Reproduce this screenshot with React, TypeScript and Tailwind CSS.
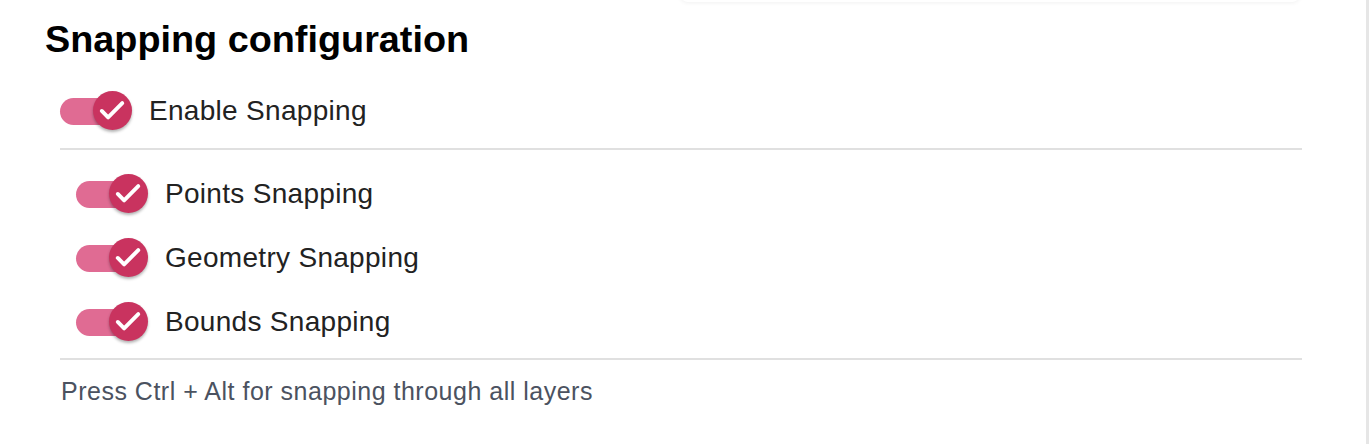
import { useState } from 'react'

type Option = { id: string; label: string }

const subOptions: Option[] = [
  { id: 'points', label: 'Points Snapping' },
  { id: 'geometry', label: 'Geometry Snapping' },
  { id: 'bounds', label: 'Bounds Snapping' },
]

function Toggle({ checked, onChange }: { checked: boolean; onChange: () => void }) {
  return (
    <button
      type="button"
      onClick={onChange}
      className="relative flex h-[40px] w-[72px] shrink-0 items-center"
    >
      <span
        className={
          'block h-[27px] w-[65px] rounded-full ' + (checked ? 'bg-[#e06b93]' : 'bg-[#c4c4c4]')
        }
      />
      <span
        className={
          'absolute top-[0px] h-[39px] w-[39px] rounded-full shadow-[0_2px_3px_rgba(0,0,0,0.3)] ' +
          (checked ? 'left-[33px] bg-[#c9335f]' : 'left-0 bg-[#f5f5f5]')
        }
      >
        {checked && (
          <svg viewBox="0 0 40 40" className="h-[39px] w-[39px]" fill="none">
            <path
              d="M9 20.5l6.5 6.5L30 12.5"
              stroke="#fff"
              strokeWidth="4"
              strokeLinecap="round"
              strokeLinejoin="round"
            />
          </svg>
        )}
      </span>
    </button>
  )
}

export default function App() {
  const [enabled, setEnabled] = useState(true)
  const [opts, setOpts] = useState<Record<string, boolean>>({
    points: true,
    geometry: true,
    bounds: true,
  })

  return (
    <div className="relative h-[444px] w-[1370px] overflow-hidden bg-white font-['Liberation_Sans',Arial,sans-serif]">
      {/* faint shadow from the panel above */}
      <div className="absolute -top-[10px] left-[680px] h-[12px] w-[620px] rounded-b-lg shadow-[0_1px_4px_rgba(0,0,0,0.06)]" />
      <div className="absolute right-[1px] top-0 h-full w-[3px] bg-[#e6e6e6]" />

      <div className="pl-[45px] pr-[68px] pt-[17px]">
        <h2 className="text-[37.8px] font-bold leading-[44px] text-black">
          Snapping configuration
        </h2>

        <div className="pl-[15px]">
          <div className="mt-[30px] flex items-center gap-[17px]">
            <Toggle checked={enabled} onChange={() => setEnabled(!enabled)} />
            <span className="text-[28px] leading-[40px] tracking-[0.3px] text-[#222]">
              Enable Snapping
            </span>
          </div>

          <div className="mt-[17px] h-[2px] bg-[#e0e0e0]" />

          <div className="flex flex-col gap-[24px] pl-[16px] pt-[24px]">
            {subOptions.map((o) => (
              <div key={o.id} className="flex items-center gap-[17px]">
                <Toggle
                  checked={opts[o.id]}
                  onChange={() => setOpts({ ...opts, [o.id]: !opts[o.id] })}
                />
                <span className="text-[28px] leading-[40px] tracking-[0.3px] text-[#222]">
                  {o.label}
                </span>
              </div>
            ))}
          </div>

          <div className="mt-[16px] h-[2px] bg-[#e0e0e0]" />

          <p className="mt-[14px] pl-[1px] text-[25px] leading-[34px] tracking-[0.5px] text-[#4b5260]">
            Press Ctrl + Alt for snapping through all layers
          </p>
        </div>
      </div>
    </div>
  )
}
